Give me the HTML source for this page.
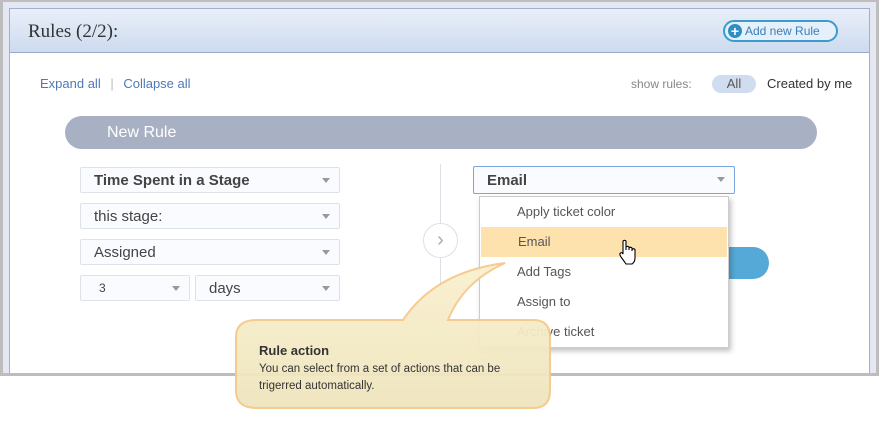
<!DOCTYPE html>
<html><head><style>
*{box-sizing:border-box;margin:0;padding:0}
body{width:880px;height:428px;background:#fff;position:relative;font-family:"Liberation Sans",Arial,sans-serif;overflow:hidden}
.frame{position:absolute;left:0;top:0;width:879px;height:376px;border:3px solid #bdbdbd;border-top-width:2px;background:#e3e8f2}
.panel{position:absolute;left:6px;top:6px;right:6px;bottom:0;background:#fff;border:1px solid #9fb0cc;border-bottom:none}
.hdr{height:44px;background:linear-gradient(#e9eff9,#cddbef);border-bottom:1px solid #9aaccc;position:relative}
.hdr h1{position:absolute;left:18px;top:12px;font-family:"Liberation Serif",serif;font-weight:normal;font-size:19px;color:#333}
.add{position:absolute;left:713px;top:11px;width:115px;height:22px;border:2px solid #3a9ccc;border-radius:11px;background:#e6f0fa;color:#3a7fb8;font-size:12px;line-height:18px;padding-left:20px}
.add i{position:absolute;left:3px;top:2px;width:14px;height:14px;border-radius:50%;background:#2f8fc3;color:#fff;font-style:normal;font-weight:bold;font-size:14px;line-height:14px;text-align:center}
.abs{position:absolute}
.sel{position:absolute;height:26px;border:1px solid #dfe2e8;border-radius:2px;background:#fafbfe;color:#444;font-size:15px;line-height:25px;padding-left:13px}
.sel:after{content:"";position:absolute;right:9px;top:10px;border:4px solid transparent;border-top:5px solid #999}
</style></head><body>
<div class="frame"><div class="panel">
<div class="hdr"><h1>Rules (2/2):</h1><div class="add"><i>+</i>Add new Rule</div></div>
</div></div>
<div class="abs" style="left:40px;top:76px;font-size:13px;color:#4f78b8">Expand all <span style="color:#bbb;margin:0 6px">|</span> Collapse all</div>
<div class="abs" style="left:631px;top:77px;font-size:12px;color:#888">show rules:</div>
<div class="abs" style="left:712px;top:75px;width:44px;height:18px;border-radius:9px;background:#d0ddf0;color:#555;font-size:13px;text-align:center;line-height:18px">All</div>
<div class="abs" style="left:767px;top:76px;font-size:13px;color:#333">Created by me</div>
<div class="abs" style="left:65px;top:116px;width:752px;height:33px;border-radius:17px;background:#a8b0c3;color:#fff;font-size:16px;line-height:33px;padding-left:42px">New Rule</div>
<div class="sel" style="left:80px;top:167px;width:260px;font-weight:bold">Time Spent in a Stage</div>
<div class="sel" style="left:80px;top:203px;width:260px">this stage:</div>
<div class="sel" style="left:80px;top:239px;width:260px">Assigned</div>
<div class="sel" style="left:80px;top:275px;width:110px;font-size:12px;padding-left:18px">3</div>
<div class="sel" style="left:195px;top:275px;width:145px">days</div>
<div class="abs" style="left:440px;top:164px;width:1px;height:150px;background:#dde0e6"></div>
<div class="abs" style="left:423px;top:223px;width:35px;height:35px;border-radius:50%;border:1px solid #dde0e6;background:#fff;color:#aaa;font-size:20px;text-align:center;line-height:32px">&#x203A;</div>
<div class="abs" style="left:620px;top:247px;width:149px;height:32px;border-radius:16px;background:#55a9d6"></div>
<div class="sel" style="left:473px;top:166px;width:262px;height:28px;border-color:#7aa5e0;font-weight:bold;line-height:27px">Email</div>
<div class="abs" style="left:479px;top:196px;width:250px;height:152px;background:#fff;border:1px solid #ccc;box-shadow:2px 3px 5px rgba(0,0,0,.25);font-size:13px;color:#555">
<div style="height:30px;line-height:30px;padding-left:37px">Apply ticket color</div>
<div style="height:30px;line-height:30px;padding-left:37px;background:#fde2ae;margin:0 1px">Email</div>
<div style="height:30px;line-height:30px;padding-left:37px">Add Tags</div>
<div style="height:30px;line-height:30px;padding-left:37px">Assign to</div>
<div style="height:30px;line-height:30px;padding-left:37px">Archive ticket</div>
</div>
<svg class="abs" style="left:618px;top:239px" width="20" height="28" viewBox="0 0 20 28">
<path d="M5,2 Q6.5,0.5 8,2 L8,11 L8,8 Q9.5,6.5 11,8 L11,11 L11,9 Q12.5,7.5 14,9 L14,12 L14,10.5 Q15.5,9 17,10.5 L17,19 Q17,23 14,25 L8,25 Q6,22 3,18 Q1,15 2.5,14 Q4,13 5,15 Z" fill="#fff" stroke="#000" stroke-width="1.1"/>
</svg>
<svg class="abs" style="left:235px;top:260px" width="320" height="152">
<defs><linearGradient id="g" x1="0" y1="0" x2="0" y2="1"><stop offset="0" stop-color="#faf1d0"/><stop offset="1" stop-color="#efe4bd"/></linearGradient></defs>
<path d="M22,60 L168,60 Q200,12 270,3 Q228,22 213,60 L298,60 Q315,60 315,77 L315,131 Q315,148 298,148 L22,148 Q1,148 1,131 L1,77 Q1,60 22,60 Z" fill="url(#g)" stroke="#f5c98a" stroke-width="2" opacity=".95"/>
</svg>
<div class="abs" style="left:259px;top:343px;font-size:13px;font-weight:bold;color:#333">Rule action</div>
<div class="abs" style="left:259px;top:361px;font-size:11.5px;color:#333;line-height:17px;width:280px">You can select from a set of actions that can be trigerred automatically.</div>
</body></html>
